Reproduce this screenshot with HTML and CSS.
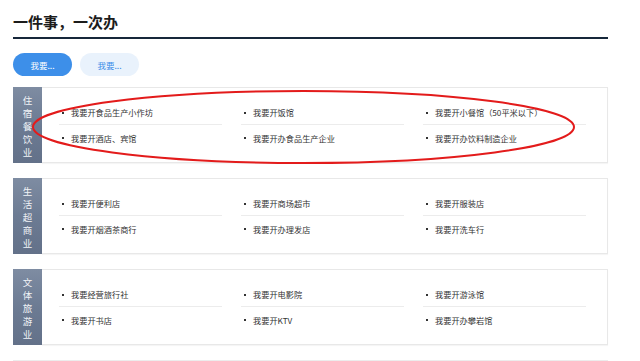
FILE: index.html
```html
<!DOCTYPE html>
<html lang="zh-CN">
<head>
<meta charset="utf-8">
<title>一件事，一次办</title>
<link rel="stylesheet" href="styles.css">
</head>
<body>
<div class="page">
  <div class="header"><h1 class="title">一件事，一次办</h1></div>
  <div class="tabs">
    <span class="tab tab-active">我要...</span>
    <span class="tab">我要...</span>
  </div>
  <div class="section">
    <div class="side"><span>住</span><span>宿</span><span>餐</span><span>饮</span><span>业</span></div>
    <ul class="items">
      <li class="item top">我要开食品生产小作坊</li>
      <li class="item top">我要开饭馆</li>
      <li class="item top">我要开小餐馆（50平米以下）</li>
      <li class="item">我要开酒店、宾馆</li>
      <li class="item">我要开办食品生产企业</li>
      <li class="item">我要开办饮料制造企业</li>
    </ul>
  </div>
  <div class="section">
    <div class="side"><span>生</span><span>活</span><span>超</span><span>商</span><span>业</span></div>
    <ul class="items">
      <li class="item top">我要开便利店</li>
      <li class="item top">我要开商场超市</li>
      <li class="item top">我要开服装店</li>
      <li class="item">我要开烟酒茶商行</li>
      <li class="item">我要开办理发店</li>
      <li class="item">我要开洗车行</li>
    </ul>
  </div>
  <div class="section">
    <div class="side"><span>文</span><span>体</span><span>旅</span><span>游</span><span>业</span></div>
    <ul class="items">
      <li class="item top">我要经营旅行社</li>
      <li class="item top">我要开电影院</li>
      <li class="item top">我要开游泳馆</li>
      <li class="item">我要开书店</li>
      <li class="item">我要开KTV</li>
      <li class="item">我要开办攀岩馆</li>
    </ul>
  </div>
  <div class="section"></div>
</div>
<svg class="mark" width="640" height="361" viewBox="0 0 640 361" xmlns="http://www.w3.org/2000/svg">
  <ellipse cx="303.5" cy="127" rx="270.5" ry="36" fill="none" stroke="#e31b1b" stroke-width="2"/>
</svg>
</body>
</html>
```
FILE: styles.css
```css
html, body {
  margin: 0;
  padding: 0;
  background: #ffffff;
  font-family: "Noto Sans CJK SC", "Noto Sans", sans-serif;
  color: #333333;
  overflow: hidden;
}
.page {
  width: 595px;
  margin-left: 13px;
  padding-top: 12px;
}
.header {
  border-bottom: 2px solid #16273a;
  height: 25px;
}
.title {
  margin: 0;
  font-size: 15px;
  line-height: 20px;
  font-weight: 700;
  color: #1c1c1c;
}
.tabs {
  display: flex;
  gap: 8px;
  margin-top: 14px;
}
.tab {
  display: flex;
  align-items: center;
  justify-content: center;
  width: 59px;
  height: 23px;
  border-radius: 12px;
  background: #e9f2fc;
  color: #3b8de8;
  font-size: 8.5px;
}
.tab-active {
  background: #3d8fe9;
  color: #ffffff;
}
.section {
  display: flex;
  height: 76px;
  margin-top: 11px;
}
.section + .section {
  margin-top: 15px;
}
.side {
  width: 29px;
  flex: none;
  display: flex;
  flex-direction: column;
  align-items: center;
  justify-content: center;
  padding-top: 2px;
  box-sizing: border-box;
  background: linear-gradient(180deg, #7e8ca2 0%, #6c7b93 50%, #637189 100%);
  color: #f1f3f7;
  font-size: 9.5px;
  line-height: 13px;
}
.items {
  flex: 1;
  margin: 0;
  list-style: none;
  padding: 12px 19px 11px 17px;
  border: 1px solid #e8e8e8;
  border-left: none;
  box-shadow: 0 1px 1px rgba(0,0,0,0.04);
  display: grid;
  grid-template-columns: repeat(3, 163px);
  grid-auto-rows: 25px;
  column-gap: 19px;
}
.section:last-child {
  border-top: 1px solid #ececec;
  height: 1px;
}
.item {
  display: flex;
  align-items: center;
  padding-left: 12px;
  position: relative;
  font-size: 8.2px;
  color: #333333;
  white-space: nowrap;
}
.item::before {
  content: "";
  position: absolute;
  left: 3px;
  top: 12px;
  width: 2px;
  height: 2px;
  background: #333333;
}
.item.top {
  border-bottom: 1px solid #ececec;
}
.mark {
  position: absolute;
  left: 0;
  top: 0;
  pointer-events: none;
}
```
